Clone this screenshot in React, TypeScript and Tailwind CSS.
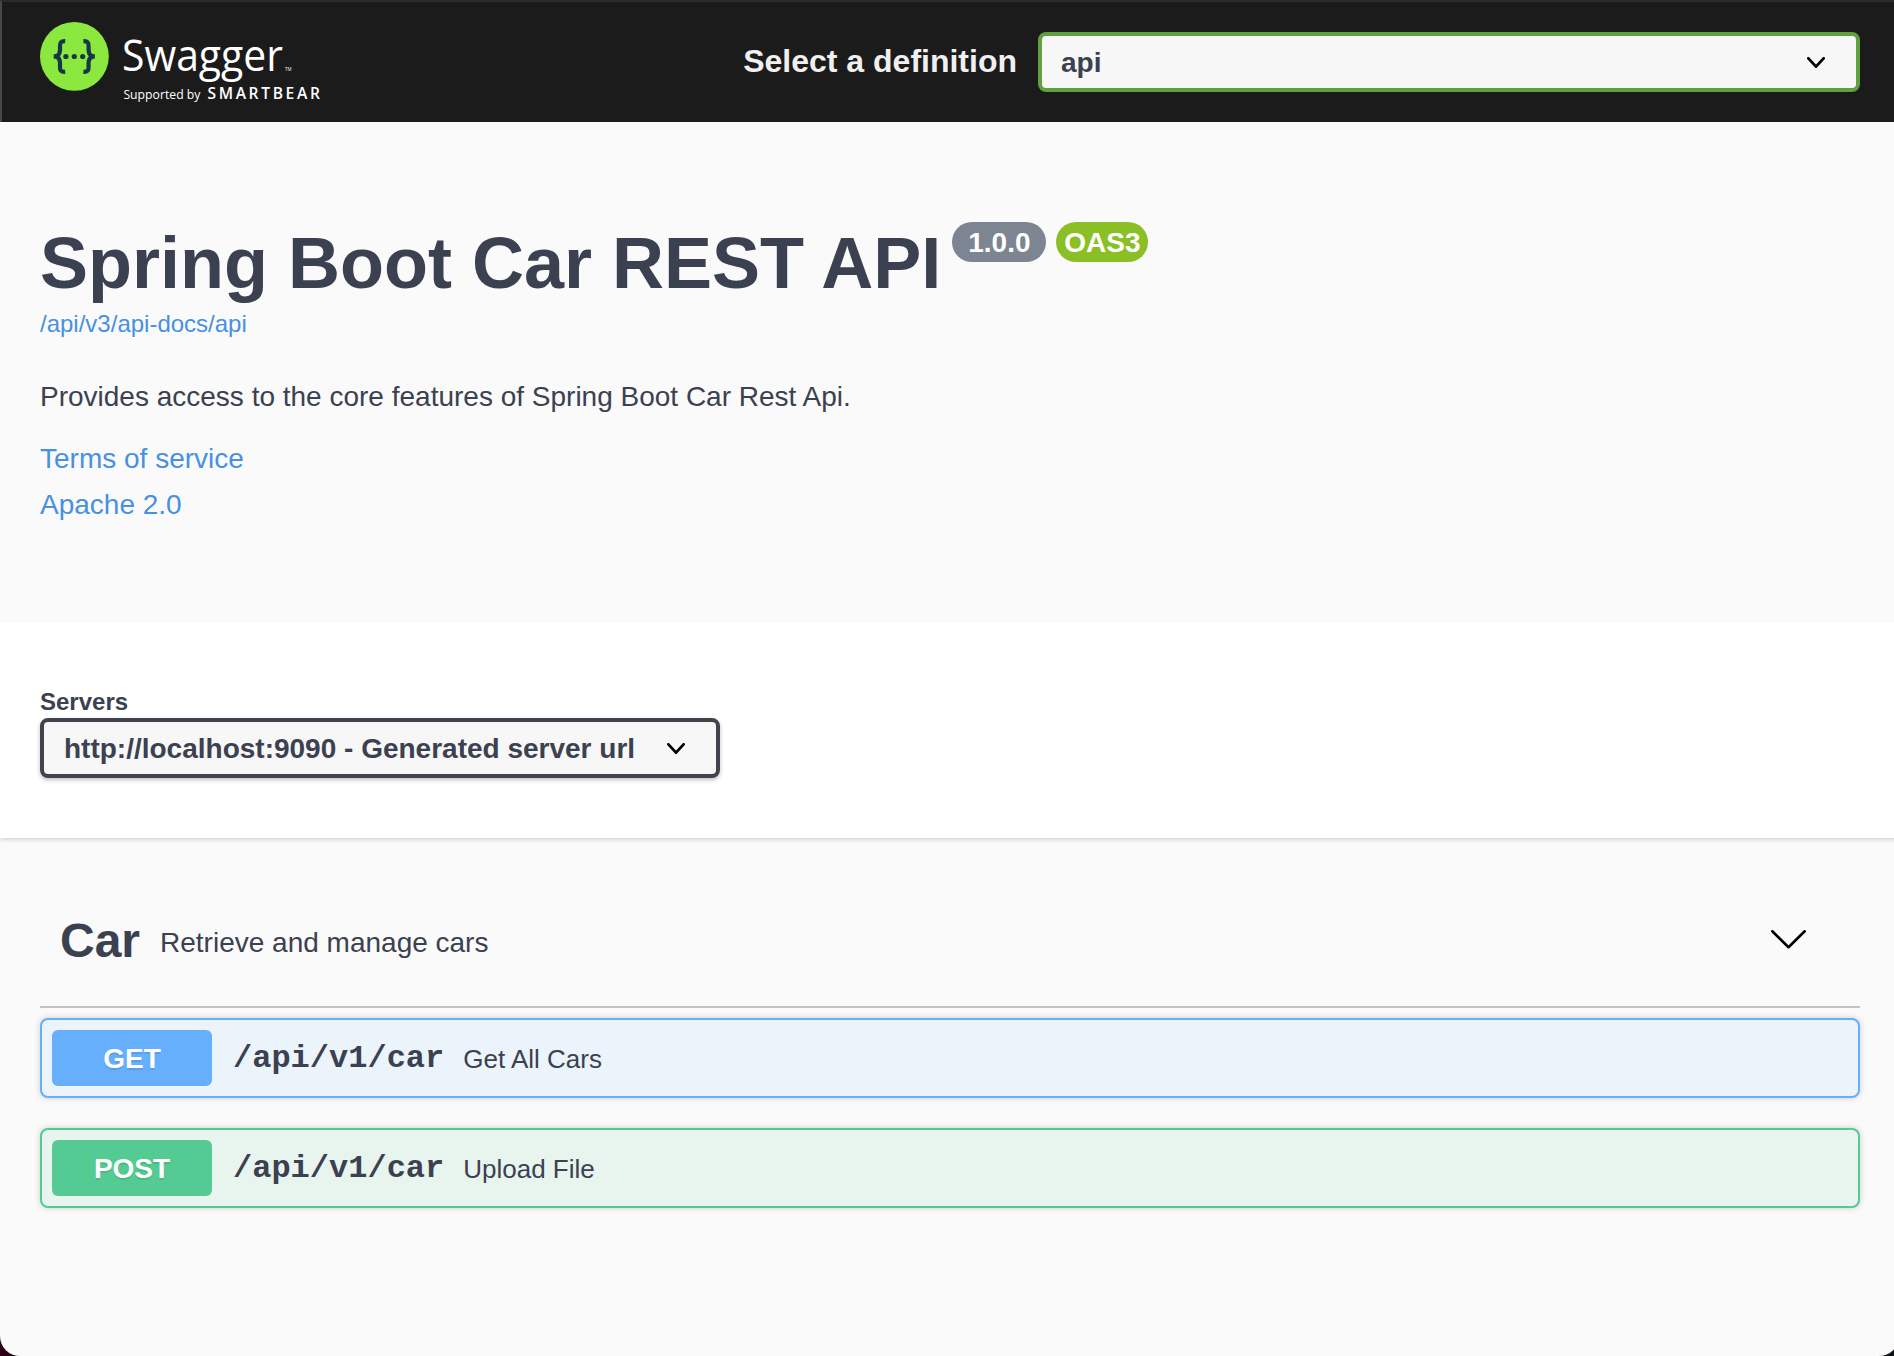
import React from "react";

function Chevron({ className, w, h, stroke }: { className?: string; w: number; h: number; stroke: number }) {
  const p = stroke / 2;
  return (
    <svg className={className} width={w} height={h} viewBox={`0 0 ${w} ${h}`} fill="none" stroke="#000" strokeWidth={stroke} strokeLinecap="round" strokeLinejoin="round">
      <path d={`M${p} ${p} L${w / 2} ${h - p} L${w - p} ${p}`} />
    </svg>
  );
}

function Logo() {
  return (
    <svg width="300" height="100" viewBox="30 10 300 100" className="block" aria-label="Swagger">
      <circle cx="74.4" cy="56.4" r="34.4" fill="#8ae83f" />
      <g fill="none" stroke="#173647" strokeWidth="4.2">
        <path d="M65.2 41.2 C60.8 41 59.8 42.6 60 46.6 C60.3 52.4 59.8 56.2 53.8 56.4 C59.8 56.6 60.3 60.4 60 66.2 C59.8 70.4 60.8 72 65.2 71.8" />
        <path d="M83.4 41.2 C87.8 41 88.8 42.6 88.6 46.6 C88.3 52.4 88.8 56.2 94.8 56.4 C88.8 56.6 88.3 60.4 88.6 66.2 C88.8 70.4 87.8 72 83.4 71.8" />
      </g>
      <g fill="#173647">
        <circle cx="65.9" cy="56.5" r="2.6" />
        <circle cx="74.3" cy="56.5" r="2.6" />
        <circle cx="82.7" cy="56.5" r="2.6" />
      </g>
      <g fill="#fff" fontFamily="'Open Sans', sans-serif">
        <text x="122" y="70.7" fontSize="44.5" textLength="161" lengthAdjust="spacingAndGlyphs">Swagger</text>
        <text x="285" y="70.5" fontSize="4.5" textLength="6.5" lengthAdjust="spacingAndGlyphs">TM</text>
        <text x="123.4" y="98.6" fontSize="12.2" textLength="77">Supported by</text>
        <text x="207.4" y="98.6" fontSize="15.6" fontWeight="600" textLength="112.5">SMARTBEAR</text>
      </g>
    </svg>
  );
}

const operations = [
  { method: "GET", path: "/api/v1/car", text: "Get All Cars", row: "border-[#65affb] bg-[#ebf3fb]", badge: "bg-[#66affc]", mb: "mb-[30px]" },
  { method: "POST", path: "/api/v1/car", text: "Upload File", row: "border-[#53cb92] bg-[#e8f5ee]", badge: "bg-[#53cb92]", mb: "" },
];

export default function App() {
  return (
    <div className="h-[1356px] w-full overflow-hidden bg-linear-to-r from-[#2d0016] from-50% to-[#0c1418] to-50% font-['Liberation_Sans',Arial,sans-serif] text-[#3b4151]">
      <div className="-mr-[5px] h-full overflow-hidden rounded-b-[20px] bg-[#fafafa] pr-[5px]">
        <header className="-mr-[5px] flex h-[122px] border-t-2 border-l-2 border-t-[#2b2b2b] border-l-[#474747] bg-[#1b1b1b] pr-[39px]">
          <div className="ml-[28px] mt-[8px] w-[300px] shrink-0">
            <Logo />
          </div>
          <div className="mt-[30px] ml-auto flex h-[60px] items-center">
            <span className="mr-[21px] whitespace-nowrap text-[32px] leading-[60px] font-bold text-[#f0f0f0] pb-[3px]">Select a definition</span>
            <div className="flex h-[60px] w-[822px] items-center justify-between rounded-lg border-4 border-[#62a03f] bg-[#f7f7f7] pl-[19px] pr-[31px] text-[28px] font-bold">
              <span className="pt-px leading-[52px]">api</span>
              <Chevron w={18} h={11} stroke={2.8} />
            </div>
          </div>
        </header>

        <section className="h-[500px] px-10 pt-[100px]">
          <div className="flex items-start whitespace-nowrap font-bold">
            <h1 className="mt-px text-[72px] leading-[80px]">Spring Boot Car REST API</h1>
            <span className="ml-[11px] h-10 w-[94px] rounded-[20px] bg-[#7d8492] text-center text-[28px] leading-[42px] text-white">1.0.0</span>
            <span className="ml-[10px] h-10 w-[92px] rounded-[20px] bg-[#8bbf26] text-center text-[28px] leading-[42px] text-white">OAS3</span>
          </div>
          <a className="mt-[7px] block text-2xl leading-7 text-[#4990e2]">/api/v3/api-docs/api</a>
          <p className="mt-[41px] text-[28px] leading-9">Provides access to the core features of Spring Boot Car Rest Api.</p>
          <a className="mt-[26px] block text-[28px] leading-9 text-[#4990e2]">Terms of service</a>
          <a className="mt-[10px] block text-[28px] leading-9 text-[#4990e2]">Apache 2.0</a>
        </section>

        <section className="-mr-[5px] h-[216px] bg-white px-10 pt-[66px] shadow-[0_2px_4px_rgba(0,0,0,0.15)]">
          <div className="text-2xl leading-7 font-bold">Servers</div>
          <div className="mt-[2px] flex h-[60px] w-[680px] items-center justify-between rounded-lg border-4 border-[#41444e] bg-[#f7f7f7] pl-5 pr-[31px] text-[28px] font-bold shadow-[0_2px_4px_rgba(0,0,0,0.25)]">
            <span className="pt-px leading-[52px] whitespace-nowrap">http://localhost:9090 - Generated server url</span>
            <Chevron w={18} h={11} stroke={2.8} />
          </div>
        </section>

        <section className="px-10">
          <div className="flex h-[170px] w-[1820px] items-start border-b-2 border-[#c1c3c8] pl-5 pt-[75px]">
            <h2 className="text-5xl leading-[56px] font-bold">Car</h2>
            <p className="ml-5 mt-3 text-[28px] leading-9">Retrieve and manage cars</p>
            <Chevron className="mt-[17px] mr-[54.5px] ml-auto" w={35} h={18.5} stroke={2.6} />
          </div>
          <div className="mt-[10px] w-[1820px]">
            {operations.map((o) => (
              <div key={o.method} className={`flex h-20 items-center rounded-lg border-2 px-[10px] shadow-[0_0_6px_rgba(0,0,0,0.19)] ${o.row} ${o.mb}`}>
                <span className={`h-14 w-40 rounded-md text-center text-[28px] leading-[57px] font-bold text-white [text-shadow:0_2px_0_rgba(0,0,0,0.1)] ${o.badge}`}>{o.method}</span>
                <span className="ml-[21px] pt-[2px] font-['Liberation_Mono','Courier_New',monospace] text-[32px] leading-[56px] font-bold">{o.path}</span>
                <span className="ml-[19px] pt-[2px] text-[26px] leading-[56px]">{o.text}</span>
              </div>
            ))}
          </div>
        </section>
      </div>
    </div>
  );
}
